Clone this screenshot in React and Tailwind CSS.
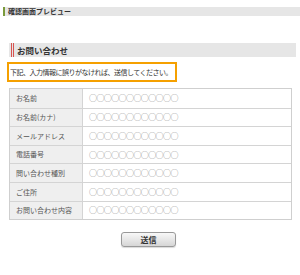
export default function App() {
  const rows = ["お名前", "お名前(カナ)", "メールアドレス", "電話番号", "問い合わせ種別", "ご住所", "お問い合わせ内容"];
  return (
    <div className="w-[300px] h-[275px] bg-white overflow-hidden" style={{ fontFamily: '"Noto Sans CJK JP", "Noto Sans", sans-serif' }}>
      <div className="h-[7px]" />
      <div className="flex items-center h-[9px] bg-[#e6e6e6] ml-[3px]">
        <div className="w-[2px] h-full bg-[#7a9a3a]" />
        <span className="ml-[3px] text-[7px] leading-none font-bold text-[#333]">確認画面プレビュー</span>
      </div>
      <div className="px-[9px] pt-[27px]">
        <div className="flex items-center h-[14px] bg-[#e6e6e6] mr-[-5px]">
          <div className="w-[1px] h-full bg-[#d9534f] ml-[2px]" />
          <div className="w-[1px] h-full bg-[#d9534f] ml-[1px]" />
          <span className="ml-[3px] text-[8.5px] leading-none font-bold text-[#333]">お問い合わせ</span>
        </div>
        <div className="mt-[5px] ml-[-2px] w-[170px] h-[20px] border-2 border-[#f5a000] flex items-center">
          <span className="ml-[1px] text-[7px] tracking-[-0.5px] leading-none text-[#333] whitespace-nowrap">下記、入力情報に誤りがなければ、送信してください。</span>
        </div>
        <div className="mt-[6px] w-[283px] border border-[#cfcfcf]">
          {rows.map((r, i) => (
            <div key={i} className={"flex h-[18.6px] " + (i > 0 ? "border-t border-[#d4d4d4]" : "")}>
              <div className="w-[73px] bg-[#efefef] border-r border-[#d4d4d4] flex items-center pl-[6px] text-[7px] text-[#555] whitespace-nowrap">{r}</div>
              <div className="flex-1 flex items-center pl-[6px] text-[8px] text-[#888] tracking-[-0.6px]">○○○○○○○○○○○○</div>
            </div>
          ))}
        </div>
        <div className="flex justify-center mt-[12px] ml-[-3px]">
          <div className="w-[55px] h-[15px] rounded-[3px] border border-[#999] bg-gradient-to-b from-[#f8f8f8] to-[#d6d6d6] flex items-center justify-center text-[8px] font-bold text-[#333] shadow-[0_1px_1px_rgba(0,0,0,0.15)]">送信</div>
        </div>
      </div>
    </div>
  );
}
